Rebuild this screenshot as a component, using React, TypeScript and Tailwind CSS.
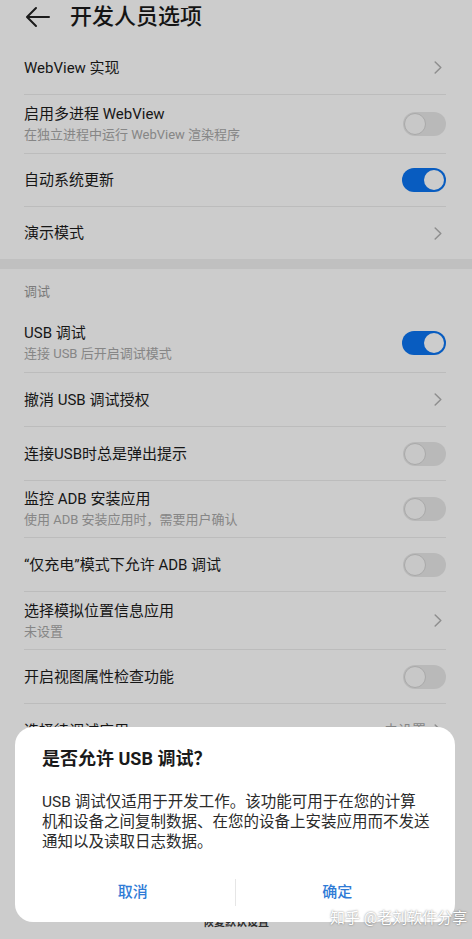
import React from "react";

type Right = "chevron" | "on" | "off" | { text: string };

const Chevron = () => (
  <svg width="8" height="13" viewBox="0 0 8 13" fill="none" className="mr-[4px] shrink-0">
    <path d="M1.2 1l5.6 5.5-5.6 5.5" stroke="#b2b2b2" strokeWidth="1.5" strokeLinecap="round" strokeLinejoin="round" />
  </svg>
);

const Toggle = ({ on }: { on: boolean }) =>
  on ? (
    <div className="w-[44px] h-[24px] rounded-full bg-[#0b74f0] flex items-center justify-end px-[2px] shrink-0">
      <div className="w-[20px] h-[20px] rounded-full bg-white" />
    </div>
  ) : (
    <div className="w-[43px] h-[24px] rounded-full bg-[#e8e8e8] flex items-center px-[1px] shrink-0">
      <div className="w-[22px] h-[22px] rounded-full bg-[#fafafa] border border-[#d4d4d4]" />
    </div>
  );

function Row({
  title,
  sub,
  right,
  h,
  border = true,
}: {
  title: string;
  sub?: string;
  right: Right;
  h: string;
  border?: boolean;
}) {
  return (
    <div className={`${h} flex items-center justify-between ${border ? "border-b border-[#ebebeb]" : ""}`}>
      <div className="flex flex-col">
        <span className="text-[15px] leading-[20px] text-[#1c1c1c] whitespace-nowrap">{title}</span>
        {sub && (
          <span className="text-[13px] leading-[18px] mt-[2px] text-[#a8a8a8] whitespace-nowrap">{sub}</span>
        )}
      </div>
      {right === "chevron" && <Chevron />}
      {right === "on" && <Toggle on />}
      {right === "off" && <Toggle on={false} />}
      {typeof right === "object" && (
        <div className="flex items-center gap-[8px]">
          <span className="text-[14px] text-[#a8a8a8]">{right.text}</span>
          <Chevron />
        </div>
      )}
    </div>
  );
}

export default function App() {
  return (
    <div className="relative w-[472px] h-[939px] overflow-hidden bg-white font-['Roboto','Noto_Sans_CJK_SC',sans-serif]">
      {/* Header */}
      <div className="h-[41px] flex items-center pb-[8px]">
        <svg width="26" height="22" viewBox="0 0 26 22" fill="none" className="ml-[25px]">
          <path d="M24 11H3M11 2L2 11l9 9" stroke="#222" strokeWidth="2" strokeLinecap="round" strokeLinejoin="round" />
        </svg>
        <span className="ml-[19px] text-[22px] leading-[28px] font-medium text-[#1a1a1a]">开发人员选项</span>
      </div>

      <div className="pl-[24px] pr-[26px]">
        <Row h="h-[54px]" title="WebView 实现" right="chevron" />
        <Row h="h-[59px]" title="启用多进程 WebView" sub="在独立进程中运行 WebView 渲染程序" right="off" />
        <Row h="h-[53px]" title="自动系统更新" right="on" />
        <Row h="h-[52px]" title="演示模式" right="chevron" border={false} />
      </div>

      <div className="h-[10px] bg-[#f1f1f1]" />

      <div className="pl-[24px] pr-[26px]">
        <div className="h-[45px] flex items-center">
          <span className="text-[13px] text-[#9a9a9a]">调试</span>
        </div>
        <Row h="h-[59px]" title="USB 调试" sub="连接 USB 后开启调试模式" right="on" />
        <Row h="h-[54px]" title="撤消 USB 调试授权" right="chevron" />
        <Row h="h-[54px]" title="连接USB时总是弹出提示" right="off" />
        <Row h="h-[57px]" title="监控 ADB 安装应用" sub="使用 ADB 安装应用时，需要用户确认" right="off" />
        <Row h="h-[54px]" title="“仅充电”模式下允许 ADB 调试" right="off" />
        <Row h="h-[58px]" title="选择模拟位置信息应用" sub="未设置" right="chevron" />
        <Row h="h-[54px]" title="开启视图属性检查功能" right="off" />
        <Row h="h-[54px]" title="选择待调试应用" right={{ text: "未设置" }} />
      </div>

      {/* footer button of page */}
      <div className="absolute left-0 right-0 bottom-[10px] text-center text-[11px] leading-[12px] font-bold text-[#3a3a3a]">
        恢复默认设置
      </div>

      {/* dim overlay */}
      <div className="absolute inset-0 bg-black/20" />

      {/* dialog */}
      <div className="absolute left-[15px] w-[440px] bottom-[17px] bg-white rounded-[18px] pt-[20px] pb-[10px]">
        <div className="px-[27px] text-[18px] leading-[24px] font-bold text-[#1a1a1a]">是否允许 USB 调试？</div>
        <div className="mt-[21px] px-[27px] text-[15.5px] leading-[20px] text-[#2b2b2b]">
          <span className="block whitespace-nowrap">USB 调试仅适用于开发工作。该功能可用于在您的计算</span>
          <span className="block whitespace-nowrap">机和设备之间复制数据、在您的设备上安装应用而不发送</span>
          <span className="block whitespace-nowrap">通知以及读取日志数据。</span>
        </div>
        <div className="mt-[20px] h-[40px] flex items-center px-[16px]">
          <button className="flex-1 text-[15px] font-medium text-[#2f7bd6]">取消</button>
          <div className="w-px h-[27px] bg-[#e6e6e6]" />
          <button className="flex-1 text-[15px] font-medium text-[#2f7bd6]">确定</button>
        </div>
      </div>

      {/* watermark */}
      <div className="absolute left-[330px] top-[908px] text-[15px] leading-[20px] text-white whitespace-nowrap [text-shadow:0_0_2px_rgba(0,0,0,0.55)]">
        知乎 @老刘软件分享
      </div>
    </div>
  );
}
